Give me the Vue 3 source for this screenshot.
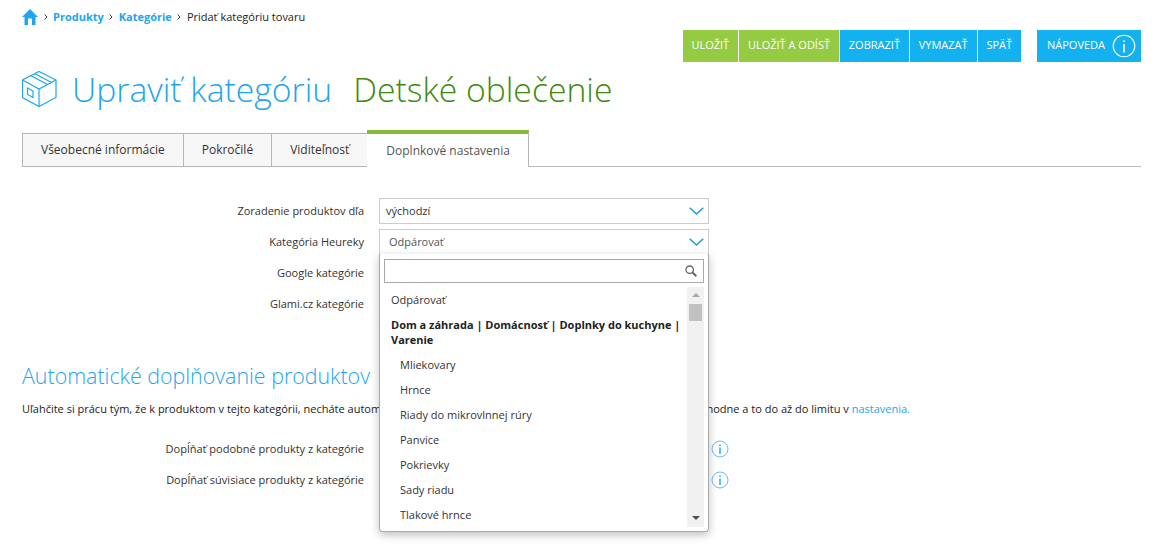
<script setup>
const actions = [
  { label: "ULOŽIŤ", green: true },
  { label: "ULOŽIŤ A ODÍSŤ", green: true },
  { label: "ZOBRAZIŤ" },
  { label: "VYMAZAŤ" },
  { label: "SPÄŤ" },
];
const tabs = ["Všeobecné informácie", "Pokročilé", "Viditeľnosť", "Doplnkové nastavenia"];
const subItems = [
  "Mliekovary",
  "Hrnce",
  "Riady do mikrovlnnej rúry",
  "Panvice",
  "Pokrievky",
  "Sady riadu",
  "Tlakové hrnce",
];
</script>

<template>
  <div class="page">
    <nav class="crumbs">
      <svg class="home" viewBox="0 0 16 16" width="16" height="16">
        <path d="M8 0 16 8H13.500V16H10V9.500H6V16H2.500V8H0z" fill="#1ea5ee" />
      </svg>
      <svg class="sep" viewBox="0 0 4 6" width="4" height="6"><path d="M.7.5 3 3 .7 5.500" fill="none" stroke="#333" /></svg>
      <a>Produkty</a>
      <svg class="sep" viewBox="0 0 4 6" width="4" height="6"><path d="M.7.5 3 3 .7 5.500" fill="none" stroke="#333" /></svg>
      <a>Kategórie</a>
      <svg class="sep" viewBox="0 0 4 6" width="4" height="6"><path d="M.7.5 3 3 .7 5.500" fill="none" stroke="#333" /></svg>
      <span>Pridať kategóriu tovaru</span>
    </nav>

    <div class="toolbar">
      <button
        v-for="a in actions"
        :key="a.label"
        class="btn"
        :class="{ green: a.green }"
      >{{ a.label }}</button>
      <button class="btn help">
        NÁPOVEDA
        <svg viewBox="0 0 24 24" width="24" height="24">
          <circle cx="12" cy="12" r="10.800" fill="none" stroke="#fff" stroke-width="1.100" />
          <rect x="11.200" y="10" width="1.600" height="8.500" fill="#fff" />
          <rect x="11.200" y="6.300" width="1.600" height="1.800" fill="#fff" />
        </svg>
      </button>
    </div>

    <h1 class="title">
      <svg class="box" viewBox="0 0 35 36" width="35" height="36" fill="none" stroke="#1ea5ee" stroke-width="1.200">
        <path d="M17 .5 34 9V26.500L17 35.500 .5 26.500V9z" />
        <path d="M.5 9 17 18 34 9M17 18V35.500" />
        <path d="M8.500 4.500 25.500 13.500M12.500 2.500 29.500 11.500" />
        <path d="M5.500 17 11 20V26.500L5.500 23.500z" />
      </svg>
      <span class="title-main">Upraviť kategóriu</span>
      <span class="title-name">Detské oblečenie</span>
    </h1>

    <div class="tabs">
      <div
        v-for="(t, i) in tabs"
        :key="t"
        class="tab"
        :class="{ active: i === 3 }"
      >{{ t }}</div>
    </div>

    <div class="form">
      <div class="row">
        <label>Zoradenie produktov dľa</label>
        <div class="select">
          <span class="value dark">východzí</span>
          <svg class="chev" viewBox="0 0 15 8" width="15" height="8"><path d="M.7.7 7.500 7 14.300.7" fill="none" stroke="#1a9be0" stroke-width="1.500" /></svg>
        </div>
      </div>

      <div class="row">
        <label>Kategória Heureky</label>
        <div class="select open">
          <span class="value">Odpárovať</span>
          <svg class="chev" viewBox="0 0 15 8" width="15" height="8"><path d="M.7.7 7.500 7 14.300.7" fill="none" stroke="#1a9be0" stroke-width="1.500" /></svg>

          <div class="dropdown">
            <div class="search">
              <svg viewBox="0 0 12 12" width="12" height="12">
                <circle cx="4.700" cy="4.700" r="3.700" fill="none" stroke="#666" stroke-width="1.300" />
                <path d="M7.500 7.500 11.300 11.300" stroke="#666" stroke-width="2" />
              </svg>
            </div>
            <div class="results">
              <ul class="list">
                <li>Odpárovať</li>
                <li class="group">Dom a záhrada | Domácnosť | Doplnky do kuchyne | Varenie</li>
                <li v-for="s in subItems" :key="s" class="sub">{{ s }}</li>
              </ul>
              <div class="scrollbar">
                <svg viewBox="0 0 8 4" width="8" height="4"><path d="M4 0 8 4H0z" fill="#a8a8a8" /></svg>
                <div class="thumb"></div>
                <svg class="down" viewBox="0 0 8 4" width="8" height="4"><path d="M0 0h8L4 4z" fill="#505050" /></svg>
              </div>
            </div>
          </div>
        </div>
      </div>

      <div class="row">
        <label>Google kategórie</label>
        <div class="select"></div>
      </div>
      <div class="row">
        <label>Glami.cz kategórie</label>
        <div class="select"></div>
      </div>
    </div>

    <h2 class="section">Automatické doplňovanie produktov</h2>
    <p class="intro">Uľahčite si prácu tým, že k produktom v tejto kategórii, necháte automaticky doplniť ďalšie produkty z vybraných kategórií a to vždy náhodne a to do až do limitu v <a>nastavenia.</a></p>

    <div class="form fill">
      <div class="row">
        <label>Dopĺňať podobné produkty z kategórie</label>
        <div class="select"></div>
        <svg class="info" viewBox="0 0 18 18" width="18" height="18">
          <circle cx="9" cy="9" r="8" fill="none" stroke="#6cbcf5" />
          <rect x="8.300" y="7.500" width="1.400" height="6.500" fill="#1ea5ee" />
          <rect x="8.300" y="4.500" width="1.400" height="1.500" fill="#1ea5ee" />
        </svg>
      </div>
      <div class="row">
        <label>Dopĺňať súvisiace produkty z kategórie</label>
        <div class="select"></div>
        <svg class="info" viewBox="0 0 18 18" width="18" height="18">
          <circle cx="9" cy="9" r="8" fill="none" stroke="#6cbcf5" />
          <rect x="8.300" y="7.500" width="1.400" height="6.500" fill="#1ea5ee" />
          <rect x="8.300" y="4.500" width="1.400" height="1.500" fill="#1ea5ee" />
        </svg>
      </div>
    </div>
  </div>
</template>

<style>
html,
body {
  margin: 0;
  background: #fff;
}
</style>

<style scoped>
.page {
  box-sizing: border-box;
  width: 1159px;
  height: 554px;
  overflow: hidden;
  padding: 9px 18px 0 22px;
  font-family: "Open Sans", sans-serif;
  font-size: 11px;
  color: #333;
}

.crumbs {
  display: flex;
  align-items: center;
  gap: 5.500px;
  height: 16px;
  font-size: 11px;
  color: #222;
}
.crumbs a {
  margin-bottom: 2px;
  color: #1ea5ee;
  font-weight: 700;
}
.crumbs span {
  margin-bottom: 2px;
}

.toolbar {
  display: flex;
  justify-content: flex-end;
  gap: 1px;
  margin-top: 5px;
}
.btn {
  box-sizing: border-box;
  height: 32px;
  padding: 0 8.900px 3px;
  border: 0;
  background: #13b1ef;
  color: #fff;
  font-family: inherit;
  font-size: 11px;
  font-weight: 400;
  display: flex;
  align-items: center;
}
.btn.green {
  background: #95cb42;
}
.btn.help {
  margin-left: 15px;
  padding: 0 5px 3px 10px;
  gap: 7px;
}
.btn.help svg {
  margin-top: 3px;
}

.title {
  display: flex;
  align-items: center;
  margin: 8px 0 0;
  height: 38px;
  font-size: 33.700px;
  font-weight: 300;
}
.box {
  margin-right: 15px;
}
.title-main {
  color: #1ea5ee;
}
.title-name {
  margin-left: 21px;
  color: #3f8a10;
}

.tabs {
  display: flex;
  align-items: flex-end;
  margin-top: 22px;
  height: 36px;
  border-bottom: 1px solid #bbb;
}
.tab {
  box-sizing: content-box;
  height: 32px;
  line-height: 32px;
  margin-bottom: -1px;
  padding: 0 18px;
  border: 1px solid #b5b5b5;
  border-left-width: 0;
  background: #f7f7f7;
  font-size: 12px;
  color: #333;
}
.tab:first-child {
  border-left-width: 1px;
}
.tab.active {
  height: 33px;
  margin-left: -1px;
  padding-left: 19px;
  border-top: 4px solid #84b93a;
  border-bottom: 0;
  background: #fff;
  line-height: 33px;
  color: #555;
}

.form {
  margin-top: 31px;
  display: flex;
  flex-direction: column;
  gap: 5px;
}
.row {
  display: flex;
  align-items: center;
  height: 26px;
}
.row label {
  width: 342px;
  margin-right: 15px;
  padding-bottom: 2px;
  text-align: right;
  flex: none;
}
.select {
  position: relative;
  box-sizing: border-box;
  width: 330px;
  height: 26px;
  border: 1px solid #ccc;
  display: flex;
  align-items: center;
  justify-content: space-between;
  padding: 0 4px 0 9px;
  background: #fff;
}
.value {
  padding-bottom: 1px;
  color: #555;
}
.value.dark {
  margin-left: -3px;
  color: #333;
}
.chev {
  display: block;
}

.dropdown {
  position: absolute;
  z-index: 2;
  top: 24px;
  left: -1px;
  box-sizing: border-box;
  width: 330px;
  height: 278px;
  padding: 5px 4px 0;
  border: 1px solid #aaa;
  border-top: 0;
  border-radius: 0 0 4px 4px;
  background: #fff;
  box-shadow: 0 3px 8px rgba(0, 0, 0, 0.25);
}
.search {
  box-sizing: border-box;
  height: 24px;
  border: 1px solid #aaa;
  display: flex;
  align-items: center;
  justify-content: flex-end;
  padding-right: 6px;
}
.results {
  display: flex;
  margin-top: 4px;
  height: 240px;
}
.list {
  flex: 1;
  margin: 0;
  padding: 0;
  list-style: none;
  overflow: hidden;
  color: #333;
}
.list li {
  padding: 0 0 0 7px;
  line-height: 15px;
  margin: 5px 0 10px;
}
.list li.group {
  font-weight: 700;
  color: #222;
}
.list li.sub {
  padding-left: 16px;
}
.scrollbar {
  width: 17px;
  background: #f1f1f1;
  display: flex;
  flex-direction: column;
  align-items: center;
  padding-top: 6px;
  box-sizing: border-box;
}
.thumb {
  width: 13px;
  height: 17px;
  margin-top: 7px;
  background: #c1c1c1;
}
.down {
  margin-top: auto;
  margin-bottom: 7px;
}

.section {
  margin: 45px 0 0;
  font-size: 21.400px;
  line-height: 28px;
  font-weight: 300;
  color: #1ea5ee;
}
.intro {
  margin: 11px 0 0;
  line-height: 15px;
  white-space: nowrap;
  color: #222;
}
.intro a {
  color: #1ea5ee;
}

.form.fill {
  margin-top: 20px;
}
.info {
  margin-left: 2px;
}
</style>
